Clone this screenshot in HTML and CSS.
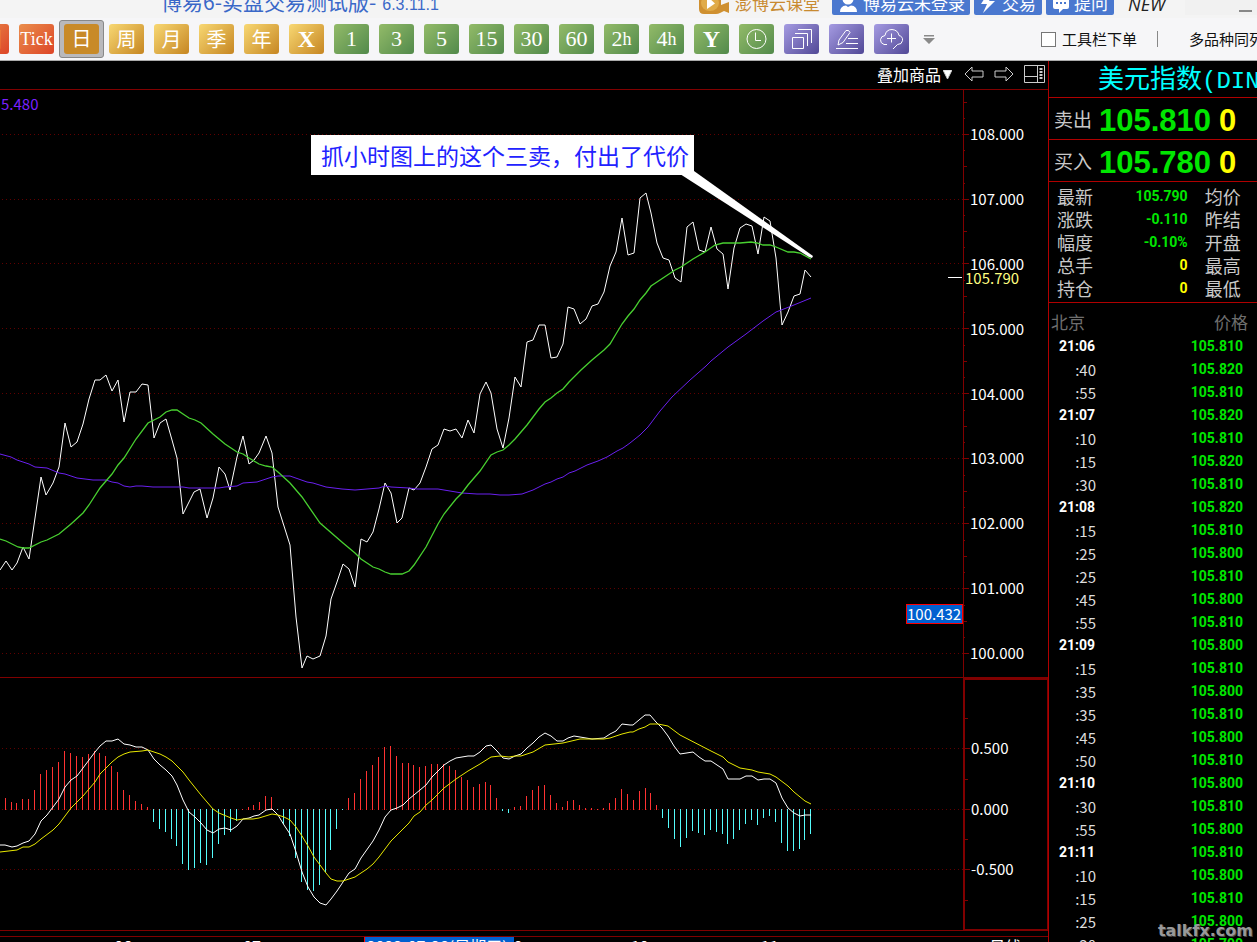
FILE: index.html
```html
<!DOCTYPE html>
<html lang="zh-CN">
<head>
<meta charset="utf-8">
<title>博易6-实盘交易测试版</title>
<link rel="stylesheet" href="styles.css">
</head>
<body>
<div class="app">
  <header class="titlebar">
    <div class="title">博易6-实盘交易测试版-<span class="version">6.3.11.1</span></div>
    <div class="title-actions">
      <button class="course" type="button">
        <svg width="30" height="22" viewBox="0 0 30 22"><path d="M0 0H22V13L30 10V21L25 19L21 21Q19 22 17 22H5Q0 22 0 17Z" fill="#cf9030"/><ellipse cx="11" cy="11" rx="9" ry="8" fill="#e0ab48"/><path d="M8 4L16 11.500L8 17Z" fill="#fff"/></svg>
        澎博云课堂
      </button>
      <button class="pill" type="button">
        <svg width="20" height="22" viewBox="0 0 20 22"><circle cx="9" cy="7" r="5.500" fill="#fff"/><path d="M1 20Q1 14 7 13.500L9 15L12 13.500Q18 14 18 20Z" fill="#fff"/></svg>
        博易云未登录
      </button>
      <button class="pill pill-trade" type="button">
        <svg width="18" height="22" viewBox="0 0 18 22"><path d="M8 1L1 12H7L3 21L15 9H9L14 1Z" fill="#fff"/></svg>
        交易
      </button>
      <button class="pill pill-ask" type="button">
        <svg width="18" height="22" viewBox="0 0 18 22"><path d="M3 4H15Q17 4 17 7V15Q17 17 15 17H11L7 21V17H3Q1 17 1 15V7Q1 4 3 4Z" fill="#fff"/><path d="M4 10H6V12H4ZM8 10H10V12H8ZM12 10H14V12H12Z" fill="#4a78cf"/></svg>
        提问
      </button>
      <span class="new">NEW</span>
      <button class="minimise" type="button" aria-label="最小化"><span></span></button>
    </div>
  </header>

  <nav class="toolbar" aria-label="周期">
    <button class="tool red" type="button">图</button>
    <button class="tool red tick" type="button">Tick</button>
    <button class="tool active" type="button" aria-pressed="true"><span>日</span></button>
    <button class="tool gold" type="button">周</button>
    <button class="tool gold" type="button">月</button>
    <button class="tool gold" type="button">季</button>
    <button class="tool gold" type="button">年</button>
    <button class="tool gold letter" type="button">X</button>
    <button class="tool green num" type="button">1</button>
    <button class="tool green num" type="button">3</button>
    <button class="tool green num" type="button">5</button>
    <button class="tool green num" type="button">15</button>
    <button class="tool green num" type="button">30</button>
    <button class="tool green num" type="button">60</button>
    <button class="tool green num" type="button">2<small>h</small></button>
    <button class="tool green num" type="button">4<small>h</small></button>
    <button class="tool green letter" type="button">Y</button>
    <button class="tool green" type="button" aria-label="时间"><svg width="35" height="30" viewBox="0 0 35 30"><circle cx="17.500" cy="15" r="9.500"/><path d="M16.500 8.500V16.500H22"/></svg></button>
    <button class="tool purple" type="button" aria-label="窗口"><svg width="35" height="30" viewBox="0 0 35 30"><path d="M8.500 13.500H19.500V24.500H8.500ZM11 9.500H23.500V22M14 5.500H27.500V19"/></svg></button>
    <button class="tool purple" type="button" aria-label="画线"><svg width="35" height="30" viewBox="0 0 35 30"><path d="M9 21L10 16L17 6.500Q20 5.500 21 8.500L14 18.500L9 21M19 14.500H29M17 19.500H29M7 24.500H29"/></svg></button>
    <button class="tool purple" type="button" aria-label="云"><svg width="35" height="30" viewBox="0 0 35 30"><path d="M13 20.500H10Q6 19 6.500 15.500Q7 12 11 11.500Q12 5.500 18 5.500Q24 6 25 11.500Q29 12.500 28.500 16.500Q28 20.500 23.500 20.500L19 25M17.500 9.500V18.500M13 14.500H22"/></svg></button>
    <button class="more" type="button" aria-label="更多"><svg width="12" height="9" viewBox="0 0 12 9"><path d="M1 0H11V1.500H1ZM0 3H12L6 9Z" fill="#8a8a8a"/></svg></button>
    <div class="tool-options">
      <label><input type="checkbox">工具栏下单</label>
      <span class="divider"></span>
      <span>多品种同列</span>
    </div>
  </nav>

  <main class="workspace">
    <section class="chart">
      <div class="chart-head">
        <button class="overlay" type="button">叠加商品<svg width="9" height="9" viewBox="0 0 9 9"><path d="M0 0H9L4.500 9Z" fill="#fff"/></svg></button>
        <button type="button" aria-label="后退"><svg width="20" height="16" viewBox="0 0 20 16"><path d="M1 8L8 1V5H19V11H8V15Z"/></svg></button>
        <button type="button" aria-label="前进"><svg width="20" height="16" viewBox="0 0 20 16"><path d="M19 8L12 1V5H1V11H12V15Z"/></svg></button>
        <button type="button" aria-label="面板"><svg width="21" height="18" viewBox="0 0 21 18"><path d="M0.500 0.500H20.500V17.500H0.500ZM13.500 0.500V17.500M0.500 11.500H13.500"/><path d="M17 3V15" stroke-width="3" stroke-dasharray="2 1"/></svg></button>
      </div>

      <div class="panel">
        <div class="plot">
          <svg viewBox="0 90 963 587" preserveAspectRatio="none">
            <g class="grid"><path d="M2 134.500H963M2 199.500H963M2 263.500H963M2 328.500H963M2 393.500H963M2 458.500H963M2 523.500H963M2 588.500H963M2 653.500H963"/></g>
            <polyline class="line white" points="0,570 6,561 12,570 17,563 23,547 29,559 41,477 46,495 53,483 59,467 65,423 71,447 77,442 83,424 89,399 95,380 100,380 106,375 112,391 118,380 124,422 130,392 136,392 142,384 148,385 154,438 160,423 166,419 172,440 177,458 183,514 194,492 200,489 207,518 213,498 219,467 225,474 230,490 237,457 243,436 249,464 254,460 259,453 266,436 272,453 278,507 290,545 296,617 302,668 307,656 313,659 320,656 326,636 331,599 337,582 343,564 349,569 355,587 361,539 367,542 373,532 379,509 385,483 391,493 397,523 402,518 409,488 414,490 420,483 426,467 432,449 438,445 444,429 450,431 456,429 462,438 468,420 474,433 480,394 486,382 491,393 497,429 503,448 509,418 515,377 521,387 527,342 533,340 539,325 545,325 551,358 557,357 563,344 568,307 574,309 580,324 586,319 592,306 598,304 604,292 610,266 616,252 622,218 628,255 634,253 640,198 646,193 651,213 657,243 663,258 669,260 675,278 681,282 687,227 693,222 699,250 705,252 711,227 717,249 723,254 728,289 734,248 740,228 746,224 752,226 758,254 764,217 770,221 776,258 782,325 788,312 794,296 800,294 805,270 811,277"/>
            <polyline class="line purple-line" points="0,454 11,457 17,460 29,464 35,467 47,468 59,473 65,474 77,478 93,480 106,480 112,482 118,483 124,486 130,487 136,486 142,486 153,487 171,487 177,487 183,487 189,488 219,488 225,487 237,486 243,483 257,482 266,479 272,477 278,476 290,476 307,482 313,483 326,487 342,489 355,490 367,489 379,488 385,486 391,487 409,488 417,489 438,489 462,493 477,494 490,494 500,495 509,495 522,494 533,490 545,484 551,482 557,479 563,477 569,473 575,471 587,465 598,461 607,457 617,451 623,448 630,443 640,435 648,427 660,411 672,397 690,380 706,366 711,361 728,347 746,334 763,321 776,312 789,307 811,298"/>
            <polyline class="line green-line" points="0,539 6,541 18,547 23,548 29,548 41,542 47,540 59,534 71,524 83,513 89,505 100,488 112,474 118,465 124,458 136,439 148,423 154,420 160,417 166,412 172,410 177,410 183,414 189,418 195,420 201,423 213,434 225,444 237,452 243,454 249,458 259,464 266,466 272,467 278,472 290,483 302,497 320,523 343,543 349,548 355,553 361,559 373,567 379,569 385,572 391,574 397,574 402,574 409,571 414,565 426,547 438,524 444,514 456,499 462,493 468,485 480,471 491,455 497,452 503,450 509,445 515,439 527,425 539,409 545,402 551,398 557,393 563,389 569,382 581,370 592,360 598,355 604,350 610,344 616,334 622,324 628,316 634,309 640,300 646,293 651,286 657,282 663,278 675,270 681,267 693,259 705,252 715,245 723,243 727,243 740,243 751,242 757,243 763,245 770,245 776,247 788,252 794,252 800,253 811,259"/>
            <path d="M948 277.500H962" stroke="#fff"/>
            <path d="M680 174L694 171L813 256L812 258L809 257Z" fill="#fff"/>
          </svg>
          <span class="ma-value">5.480</span>
          <span class="callout">抓小时图上的这个三卖，付出了代价</span>
          <span class="cursor-price">100.432</span>
        </div>
        <div class="axis">
          <svg viewBox="0 90 6 587" preserveAspectRatio="none"><path d="M0 134.500H5M0 199.500H5M0 263.500H5M0 328.500H5M0 393.500H5M0 458.500H5M0 523.500H5M0 588.500H5M0 653.500H5M0 166.500H3M0 231.500H3M0 296.500H3M0 361.500H3M0 426.500H3M0 491.500H3M0 556.500H3M0 621.500H3M0 102.500H3"/><path d="M0 118.500H1M0 150.500H1M0 183.500H1M0 215.500H1M0 247.500H1M0 280.500H1M0 312.500H1M0 345.500H1M0 377.500H1M0 410.500H1M0 442.500H1M0 475.500H1M0 507.500H1M0 540.500H1M0 572.500H1M0 605.500H1M0 637.500H1"/></svg>
          <div class="labels">
            <span>108.000</span><span>107.000</span><span>106.000</span><span>105.000</span><span>104.000</span><span>103.000</span><span>102.000</span><span>101.000</span><span>100.000</span>
          </div>
          <span class="last-price">105.790</span>
        </div>
      </div>

      <div class="panel">
        <div class="plot">
          <svg viewBox="0 678 963 252" preserveAspectRatio="none">
            <g class="grid"><path d="M2 748.500H963M2 809.500H963M2 869.500H963"/></g>
            <g transform="translate(0.5 0)">
              <path class="line" stroke="#ff3232" d="M5 810V798M11 810V802M16 810V803M22 810V799M28 810V799M34 810V790M40 810V774M46 810V770M52 810V767M58 810V762M64 810V751M70 810V753M76 810V756M82 810V757M88 810V754M94 810V751M99 810V753M105 810V756M111 810V766M117 810V772M123 810V790M129 810V795M135 810V801M141 810V804M147 810V807M242 810V809M248 810V807M253 810V805M259 810V802M265 810V796M271 810V797M348 810V798M354 810V793M360 810V779M366 810V771M372 810V765M378 810V757M384 810V747M390 810V746M396 810V756M402 810V763M408 810V763M413 810V765M419 810V767M425 810V766M431 810V764M437 810V764M443 810V764M449 810V766M455 810V770M461 810V777M467 810V780M473 810V787M479 810V784M485 810V782M490 810V785M496 810V798M514 810V807M520 810V806M526 810V796M532 810V790M538 810V786M544 810V785M550 810V795M556 810V803M562 810V807M567 810V801M573 810V800M579 810V805M585 810V808M591 810V808M597 810V809M603 810V808M609 810V803M615 810V798M621 810V789M627 810V794M633 810V800M639 810V791M645 810V788M650 810V793M656 810V805"/>
              <path class="line" stroke="#54fcfc" d="M153 809V822M159 809V829M165 809V832M171 809V839M176 809V846M182 809V864M188 809V870M194 809V868M200 809V863M206 809V865M212 809V858M218 809V844M224 809V835M230 809V832M236 809V821M277 809V810M283 809V824M289 809V836M295 809V858M301 809V882M307 809V890M313 809V891M319 809V885M325 809V872M330 809V850M336 809V829M342 809V810M502 809V811M508 809V813M662 809V818M668 809V828M674 809V839M680 809V847M686 809V838M692 809V831M698 809V833M704 809V835M710 809V830M716 809V832M722 809V834M727 809V844M733 809V839M739 809V830M745 809V824M751 809V820M757 809V825M763 809V818M769 809V816M775 809V822M781 809V843M787 809V851M793 809V851M799 809V849M804 809V840M810 809V834"/>
            </g>
            <polyline class="line white" points="0,845 5,845 12,847 17,846 23,843 29,841 35,834 41,821 47,815 53,807 59,799 65,787 71,780 77,776 83,768 89,760 95,752 100,746 106,741 112,741 118,739 124,744 130,745 136,747 142,747 148,750 154,759 160,765 166,770 172,776 177,785 183,800 189,812 195,817 201,823 207,830 213,833 219,829 225,828 231,830 237,826 243,819 249,818 254,816 259,815 266,810 272,809 278,815 284,825 290,834 296,852 302,872 308,887 314,897 320,903 326,905 331,899 337,891 343,882 349,873 355,869 361,858 373,841 379,830 385,817 391,810 397,808 403,805 409,799 420,790 426,785 432,777 438,771 444,765 450,761 456,758 462,757 468,756 474,756 480,752 486,746 491,745 497,751 503,758 509,759 515,756 521,754 527,748 533,743 539,737 545,733 551,736 557,741 563,741 568,738 574,736 580,737 592,739 604,738 610,734 616,731 622,724 630,725 633,725 639,720 645,715 650,715 656,722 662,728 668,736 674,746 680,754 693,752 699,757 705,761 711,761 723,769 728,779 734,779 740,779 746,776 752,776 758,780 764,779 770,779 776,783 782,798 788,808 794,813 800,816 805,815 811,815"/>
            <polyline class="line yellow-line" points="0,852 17,850 23,847 29,847 35,844 41,839 53,830 59,824 65,816 71,808 83,796 95,782 100,774 106,768 112,762 118,757 124,754 130,752 142,751 148,750 154,752 160,754 166,757 172,761 183,772 189,780 201,795 213,809 219,813 231,818 237,820 243,819 253,819 259,818 272,814 278,815 284,817 290,820 296,827 302,836 308,846 314,857 326,873 331,879 337,881 343,881 355,877 367,869 373,864 379,857 391,841 409,823 414,816 420,812 426,805 432,800 444,788 456,779 468,771 480,764 491,757 500,756 509,757 515,756 521,756 533,752 545,745 563,743 580,739 604,739 610,738 622,734 630,732 633,732 639,729 645,727 650,724 658,724 668,726 680,735 711,751 723,757 728,762 740,768 746,769 752,770 758,772 770,774 776,777 788,786 794,792 805,801 811,804"/>
          </svg>
        </div>
        <div class="axis axis-boxed">
          <svg viewBox="0 680 6 249" preserveAspectRatio="none"><path d="M0 748.500H5M0 809.500H5M0 869.500H5M0 779.500H3M0 839.500H3M0 718.500H3M0 900.500H3"/></svg>
          <div class="labels">
            <span>0.500</span><span>0.000</span><span>-0.500</span>
          </div>
        </div>
      </div>

      <div class="dates">
        <span style="left:10.9%">06</span>
        <span style="left:23.2%">07</span>
        <span style="left:48.2%">09</span>
        <span style="left:60.2%">10</span>
        <span style="left:72.6%">11</span>
        <span class="cursor-date" style="left:34.7%">2023-07-28(星期五)</span>
        <span style="left:94.4%">日线</span>
      </div>
    </section>

    <aside class="quote">
      <h1>美元指数<span>(DIN</span></h1>
      <div class="deal"><span>卖出</span><b>105.810</b><b class="vol">0</b></div>
      <div class="deal"><span>买入</span><b>105.780</b><b class="vol">0</b></div>
      <table class="stats">
        <tbody>
          <tr><th>最新</th><td>105.790</td><th>均价</th></tr>
          <tr><th>涨跌</th><td>-0.110</td><th>昨结</th></tr>
          <tr><th>幅度</th><td>-0.10%</td><th>开盘</th></tr>
          <tr><th>总手</th><td class="vol">0</td><th>最高</th></tr>
          <tr><th>持仓</th><td class="vol">0</td><th>最低</th></tr>
        </tbody>
      </table>
      <div class="tape-wrap">
      <table class="tape">
        <thead><tr><th>北京</th><th>价格</th></tr></thead>
        <tbody>
          <tr class="minute"><td>21:06</td><td>105.810</td></tr>
          <tr><td>:40</td><td>105.820</td></tr>
          <tr><td>:55</td><td>105.810</td></tr>
          <tr class="minute"><td>21:07</td><td>105.820</td></tr>
          <tr><td>:10</td><td>105.810</td></tr>
          <tr><td>:15</td><td>105.820</td></tr>
          <tr><td>:30</td><td>105.810</td></tr>
          <tr class="minute"><td>21:08</td><td>105.820</td></tr>
          <tr><td>:15</td><td>105.810</td></tr>
          <tr><td>:25</td><td>105.800</td></tr>
          <tr><td>:25</td><td>105.810</td></tr>
          <tr><td>:45</td><td>105.800</td></tr>
          <tr><td>:55</td><td>105.810</td></tr>
          <tr class="minute"><td>21:09</td><td>105.800</td></tr>
          <tr><td>:15</td><td>105.810</td></tr>
          <tr><td>:35</td><td>105.800</td></tr>
          <tr><td>:35</td><td>105.810</td></tr>
          <tr><td>:45</td><td>105.800</td></tr>
          <tr><td>:50</td><td>105.810</td></tr>
          <tr class="minute"><td>21:10</td><td>105.800</td></tr>
          <tr><td>:30</td><td>105.810</td></tr>
          <tr><td>:55</td><td>105.800</td></tr>
          <tr class="minute"><td>21:11</td><td>105.810</td></tr>
          <tr><td>:10</td><td>105.800</td></tr>
          <tr><td>:15</td><td>105.810</td></tr>
          <tr><td>:25</td><td>105.800</td></tr>
          <tr><td>:30</td><td>105.790</td></tr>
        </tbody>
      </table>
      </div>
      <span class="watermark">talkfx.com</span>
    </aside>
  </main>
</div>
</body>
</html>
```

FILE: styles.css
```css
* { box-sizing: border-box; }

body {
  margin: 0;
  background: #000;
  font-family: "Noto Sans CJK SC", "Liberation Sans", sans-serif;
}

button {
  margin: 0;
  padding: 0;
  border: 0;
  background: none;
  color: inherit;
  font: inherit;
}

svg { display: block; flex: none; }

.app {
  display: grid;
  grid-template-rows: 18px 43px minmax(0, 1fr);
  grid-template-columns: minmax(0, 1fr);
  height: 100vh;
  overflow: hidden;
}

/* Title bar */
.titlebar {
  display: flex;
  align-items: flex-end;
  padding: 0 0 3px 161px;
  background: #f4f4f4;
  white-space: nowrap;
}

.title { color: #3a68c8; font-size: 21px; line-height: 20px; }
.version { margin-left: 6px; font-family: "Liberation Sans", sans-serif; font-size: 16px; }

.title-actions {
  display: flex;
  align-items: flex-end;
  flex: 0 0 567px;
  gap: 4px;
  margin-left: auto;
}

.title-actions button { display: flex; align-items: center; }

.course {
  gap: 6px;
  width: 138px;
  height: 25px;
  padding-left: 9px;
  color: #c88a30;
  font-size: 17px;
}

.pill {
  gap: 4px;
  height: 25px;
  padding: 0 3px 0 7px;
  width: 138px;
  border-radius: 0 0 2px 2px;
  background: #4a78cf;
  color: #fff;
  font-size: 17px;
}

.pill-trade, .pill-ask { width: 68px; padding-left: 6px; }

.new {
  width: 63px;
  padding-left: 10px;
  color: #222;
  font-family: "Open Sans", sans-serif;
  font-size: 18px;
  font-style: italic;
  line-height: 22px;
}

.title-actions .minimise {
  flex: 1;
  justify-content: flex-end;
  align-items: flex-end;
  height: 15px;
  padding: 0 5px 3px 0;
  background: #f1f1f1;
}

.minimise span { width: 13px; height: 2px; background: #888; }

/* Toolbar */
.toolbar {
  display: flex;
  align-items: center;
  gap: 10px;
  border-bottom: 1px solid #aaa;
  background: #f6f6f8;
  white-space: nowrap;
}

.tool {
  display: flex;
  flex: none;
  align-items: center;
  justify-content: center;
  width: 35px;
  height: 30px;
  border-radius: 3px;
  color: #fff;
  font-size: 20px;
  line-height: 28px;
}

.tool:first-child { margin-left: -26px; }
.tool svg { fill: none; stroke: #fff; stroke-width: 1; }

.red { background: linear-gradient(135deg, #ea8e4c, #dd4528); }
.gold { background: linear-gradient(135deg, #f8d873, #c68622); }
.green { background: linear-gradient(135deg, #93bb69, #528a4b); }
.purple { background: linear-gradient(135deg, #a59be2, #514896); }

.tick, .num, .letter { font-family: "Liberation Serif", serif; }
.num { font-size: 22px; }
.tick { font-size: 18px; }
.letter { font-size: 24px; font-weight: bold; }
.num small { font-size: 18px; }

.active {
  width: 45px;
  height: 38px;
  margin: 0 -5px;
  border: 1px solid #888;
  background: #b9b9bc;
}

.active span {
  width: 35px;
  height: 30px;
  border-radius: 3px;
  background: #c88a28;
}

.more { margin-left: 4px; }

.tool-options {
  display: flex;
  align-items: center;
  flex: 0 0 216px;
  min-width: 0;
  margin-left: auto;
  overflow: hidden;
  font-size: 15px;
  line-height: 20px;
  color: #111;
}

.tool-options > * { flex: none; }

.tool-options label { display: flex; align-items: center; gap: 6px; }

.tool-options input {
  appearance: none;
  width: 15px;
  height: 15px;
  margin: 0;
  border: 1px solid #777;
  background: #fff;
}

.divider { width: 1px; height: 16px; margin: 0 31px 0 20px; background: #888; }

/* Workspace */
.workspace {
  display: grid;
  grid-template-columns: minmax(0, 1fr) 209px;
  min-height: 0;
  background: #000;
  color: #fff;
}

.chart {
  display: grid;
  grid-template-rows: 29px minmax(0, 588fr) minmax(0, 253fr) 11px;
  min-width: 0;
  min-height: 0;
}

.chart-head {
  display: flex;
  align-items: center;
  justify-content: flex-end;
  gap: 10px;
  padding: 0 3px 2px 0;
  border-bottom: 1px solid #800000;
}

.chart-head svg { fill: none; stroke: #ccc; }
.overlay { display: flex; align-items: center; gap: 2px; margin-right: 2px; font-size: 16px; line-height: 24px; }

.panel {
  display: grid;
  grid-template-columns: minmax(0, 1fr) 85px;
  min-height: 0;
  border-bottom: 1px solid #800000;
}

.plot { position: relative; min-height: 0; }
.plot > svg { width: 100%; height: 100%; }

.grid path { fill: none; stroke: #600000; stroke-dasharray: 1 3; shape-rendering: crispEdges; }
.line { fill: none; vector-effect: non-scaling-stroke; }
.white { stroke: #fff; }
.green-line { stroke: #48d030; stroke-width: 1.3; }
.purple-line { stroke: #6a20f0; }
.yellow-line { stroke: #e8e800; }

.axis {
  position: relative;
  display: flex;
  min-height: 0;
  border-left: 1px solid #800000;
  font-size: 15px;
  line-height: 20px;
}

.axis > svg { width: 6px; height: 100%; stroke: #800000; }

.labels {
  display: flex;
  flex-direction: column;
  justify-content: space-between;
  padding: 34px 0 14px;
}

.axis-boxed { border: 2px solid #800000; border-width: 2px 1px 1px 2px; }
.axis-boxed .labels { padding: 58px 0 50px; }

.ma-value {
  position: absolute;
  top: 4px;
  left: 1px;
  color: #7a20ff;
  font-size: 15px;
  line-height: 20px;
}

.callout {
  position: absolute;
  top: 45px;
  left: 311px;
  width: 383px;
  padding-left: 10px;
  background: #fff;
  color: #2222ff;
  font-size: 23px;
  line-height: 40px;
  white-space: nowrap;
}

.cursor-price {
  position: absolute;
  top: 514px;
  right: 0;
  width: 57px;
  border: 1px solid #f00;
  background: #0060d0;
  font-size: 15px;
  line-height: 18px;
}

.last-price {
  position: absolute;
  top: 178px;
  left: 1px;
  color: #ffff80;
}

.dates {
  position: relative;
  margin-top: 5px;
  border-top: 1px solid #800000;
  overflow: hidden;
  font-size: 16px;
  line-height: 18px;
  white-space: nowrap;
}

.dates span { position: absolute; top: 0; }
.dates .cursor-date { width: 150px; padding-left: 2px; border-left: 1px solid #f00; background: #0060d0; }

/* Quote panel */
.quote {
  position: relative;
  display: flex;
  flex-direction: column;
  min-height: 0;
  border-left: 1px solid #b00000;
  overflow: hidden;
}

.quote h1 {
  flex: none;
  height: 37px;
  margin: 0;
  padding-left: 49px;
  border-bottom: 1px solid #b00000;
  color: #00ffff;
  font-size: 26px;
  font-weight: normal;
  line-height: 32px;
  white-space: nowrap;
}

.quote h1 span { font-family: "Liberation Mono", monospace; font-size: 24px; }

.deal {
  display: flex;
  flex: none;
  align-items: center;
  height: 42px;
  padding-left: 5px;
  border-bottom: 1px solid #b00000;
  color: #c8c8c8;
  font-size: 19px;
}

.deal b {
  margin-left: 7px;
  color: #00e600;
  font-family: "Liberation Sans", sans-serif;
  font-size: 31px;
  line-height: 40px;
  padding-top: 4px;
}

.quote .vol { color: #ffff00; }
.deal .vol { margin-left: 8px; }

table { border-collapse: collapse; table-layout: fixed; }
th, td { padding: 0; }
th { font-weight: normal; }
td { text-align: right; }

.stats {
  flex: none;
  width: 100%;
  color: #c8c8c8;
}

.stats tr { height: 23px; }
.stats th { font-size: 18px; line-height: 23px; text-align: left; padding-left: 8px; }
.stats th + td { width: 86px; }
.stats td + th { width: 65px; padding-left: 17px; }
.stats td { color: #00e600; font: bold 14px/23px Roboto, sans-serif; }
.stats tbody::before { content: ""; display: table-row; height: 3px; }
.stats tbody::after { content: ""; display: table-row; height: 2px; }

.tape-wrap { flex: 1; min-height: 0; border-top: 1px solid #b00000; overflow: hidden; }
.tape { width: 100%; }
.tape th { height: 32px; padding-top: 5px; color: #6e6e6e; font-size: 17px; line-height: 26px; }
.tape th:first-child { width: 48px; padding-left: 2px; text-align: left; }
.tape th:last-child { padding-right: 9px; text-align: right; }
.tape td { height: 23px; line-height: 22px; font-size: 15px; color: #ddd; }
.tape td:first-child { padding-right: 1px; }
.tape td:last-child { padding-right: 14px; color: #00e600; font: bold 14px/23px Roboto, sans-serif; }
.tape .minute td:first-child { padding-right: 2px; color: #fff; font: bold 14px/23px Roboto, sans-serif; }

.watermark {
  position: absolute;
  right: 4px;
  bottom: 0;
  color: #999;
  font: bold 16px/22px "DejaVu Sans", sans-serif;
  text-shadow: 1px 1px 0 #444;
}
```
